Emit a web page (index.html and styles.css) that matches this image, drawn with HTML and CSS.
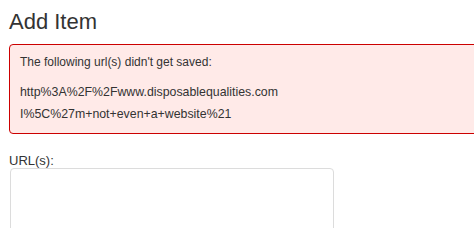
FILE: index.html
```html
<!DOCTYPE html>
<html>
<head>
<meta charset="utf-8">
<link rel="stylesheet" href="styles.css">
</head>
<body>
<div class="page">
  <h1 class="title">Add Item</h1>
  <div class="alert">
    <p class="alert-intro">The following url(s) didn't get saved:</p>
    <p class="alert-urls">http%3A%2F%2Fwww.disposablequalities.com<br>I%5C%27m+not+even+a+website%21</p>
  </div>
  <label class="field-label" for="urls">URL(s):</label>
  <textarea class="field-input" id="urls"></textarea>
</div>
</body>
</html>
```
FILE: styles.css
```css
html, body {
  margin: 0;
  padding: 0;
  background: #fff;
}
.page {
  box-sizing: border-box;
  height: 228px;
  overflow: hidden;
  padding: 9px 0 0 9px;
  font-family: "Liberation Sans", Arial, sans-serif;
  color: #333;
  display: flex;
  flex-direction: column;
  align-items: flex-start;
}
.title {
  margin: 0;
  font-size: 22px;
  line-height: 26px;
  font-weight: normal;
  color: #333;
}
.alert {
  box-sizing: border-box;
  align-self: stretch;
  margin: 9px -20px 0 0;
  padding: 6px 10px 8px 10px;
  border: 1px solid #cc0000;
  border-radius: 4px;
  background: #ffeae8;
  font-size: 12px;
  line-height: 22px;
  color: #333;
}
.alert p {
  margin: 0;
}
.alert-intro {
  margin-bottom: 8px !important;
}
.alert-urls {
  font-size: 12.35px;
}
.field-label {
  margin-top: 19px;
  font-size: 13px;
  line-height: 15px;
  color: #333;
}
.field-input {
  box-sizing: border-box;
  display: block;
  flex-shrink: 0;
  margin: 0 0 0 1px;
  width: 324px;
  height: 100px;
  border: 1px solid #dcdcdc;
  border-radius: 4px;
  background: #fff;
  resize: none;
  padding: 4px;
}
```
